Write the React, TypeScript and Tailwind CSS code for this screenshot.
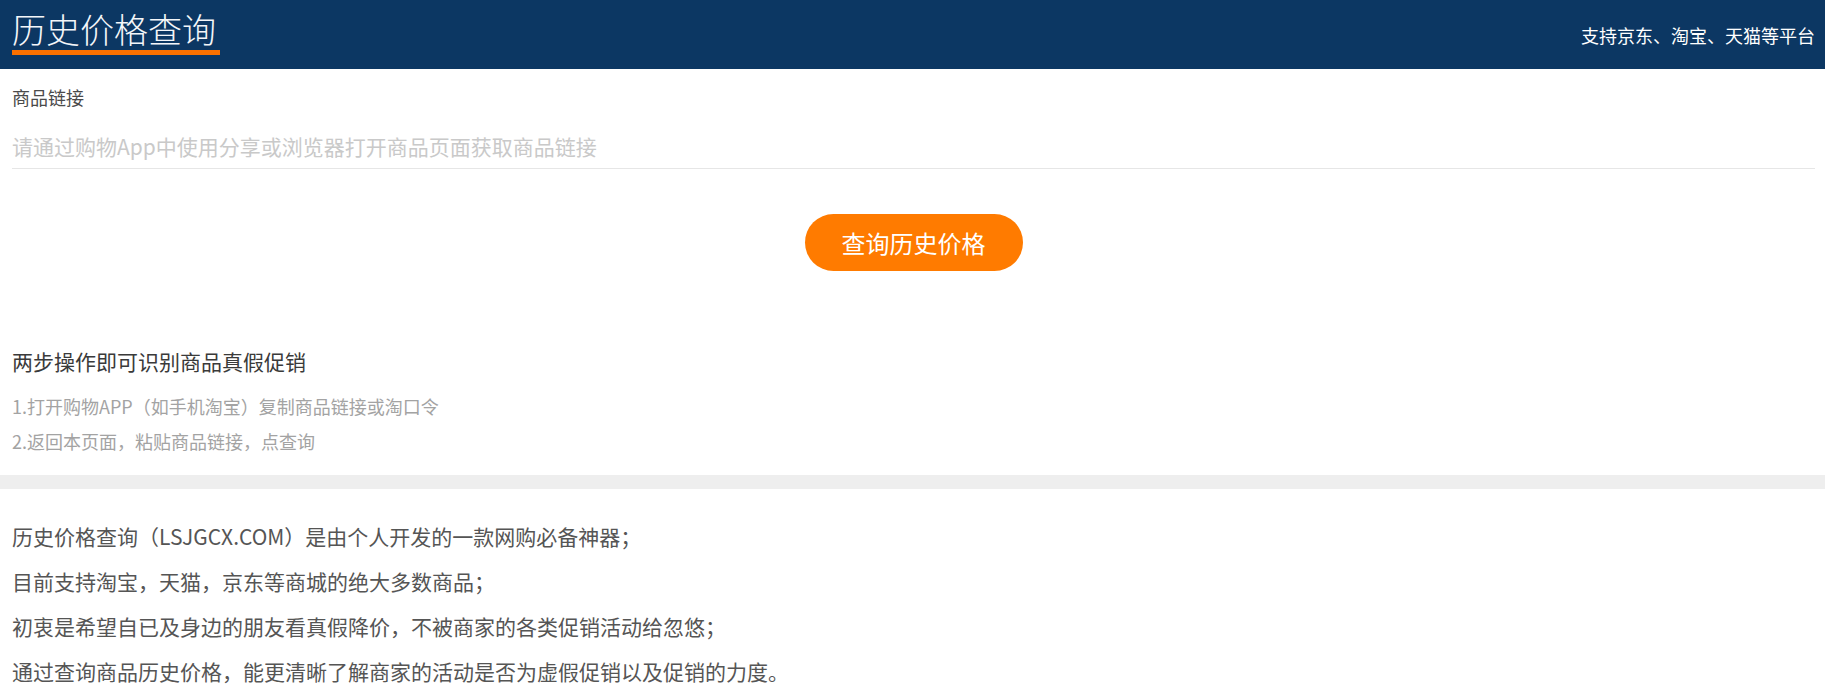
import React from "react";

export default function App() {
  return (
    <div className="w-[1825px] min-h-[694px] bg-white font-['Noto_Sans_CJK_SC','Noto_Sans',sans-serif]">
      <header className="h-[69px] bg-[#0c3763] flex justify-between pl-3 pr-[10px]">
        <div className="self-start mt-[9px] pr-[4px] pb-[1px] border-b-[5px] border-[#fa7000] text-[34px] leading-[40px] font-light text-[#f4f6f9] font-['Noto_Sans_CJK_SC_Light','Noto_Sans_CJK_SC_DemiLight','Noto_Sans_CJK_SC',sans-serif]">
          历史价格查询
        </div>
        <div className="self-center text-[18px] leading-[24px] text-white">
          支持京东、淘宝、天猫等平台
        </div>
      </header>

      <section className="pl-3 pr-[10px] pt-4">
        <div className="text-[18px] leading-[24px] text-[#4a4a4a]">商品链接</div>
        <div className="mt-[22px] pb-[7px] border-b border-[#e6e6e6]">
          <input
            type="text"
            placeholder="请通过购物App中使用分享或浏览器打开商品页面获取商品链接"
            className="w-full h-[30px] leading-[30px] text-[21px] text-[#333] placeholder:text-[#c9c9c9] outline-none bg-transparent"
          />
        </div>
        <div className="flex justify-center mt-[45px]">
          <button className="w-[218px] h-[57px] rounded-full bg-[#ff7b00] text-white text-[24px] leading-[30px]">
            查询历史价格
          </button>
        </div>
        <div className="mt-[76px] text-[21px] leading-[28px] text-[#3a3a3a]">
          两步操作即可识别商品真假促销
        </div>
        <div className="mt-[14px] text-[18px] leading-[35px] text-[#a3a3a3]">
          <div>1.打开购物APP（如手机淘宝）复制商品链接或淘口令</div>
          <div>2.返回本页面，粘贴商品链接，点查询</div>
        </div>
      </section>

      <div className="mt-[16px] h-[14px] bg-[#eeeeee]" />

      <section className="pl-3 pr-[10px] pt-[25px] text-[21px] leading-[45px] text-[#555]">
        <div>历史价格查询（LSJGCX.COM）是由个人开发的一款网购必备神器；</div>
        <div>目前支持淘宝，天猫，京东等商城的绝大多数商品；</div>
        <div>初衷是希望自已及身边的朋友看真假降价，不被商家的各类促销活动给忽悠；</div>
        <div>通过查询商品历史价格，能更清晰了解商家的活动是否为虚假促销以及促销的力度。</div>
      </section>
    </div>
  );
}
